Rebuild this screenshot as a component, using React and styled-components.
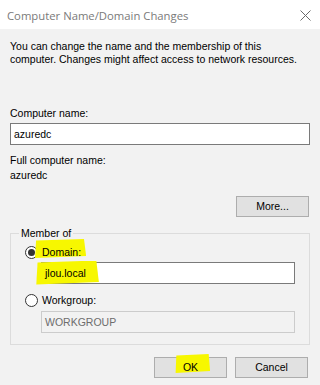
import React from "react";
import styled, { createGlobalStyle } from "styled-components";

const GlobalStyle = createGlobalStyle`
  html, body {
    margin: 0;
    padding: 0;
    background: #f2f2f2;
  }
  * {
    box-sizing: border-box;
  }
`;

export default function App() {
  return (
    <>
      <GlobalStyle />
      <Dialog>
        <TitleBar>
          <Title>Computer Name/Domain Changes</Title>
          <CloseButton aria-label="Close">
            <svg width="11" height="11" viewBox="0 0 11 11">
              <path d="M0.5 0.5 L10.5 10.5 M10.5 0.5 L0.5 10.5" stroke="#6a6a6a" strokeWidth="1" fill="none" />
            </svg>
          </CloseButton>
        </TitleBar>

        <Body>
          <Intro>
            You can change the name and the membership of this
            <br />
            computer. Changes might affect access to network resources.
          </Intro>

          <Label $top={41}>Computer name:</Label>
          <TextBox $gap={3}>azuredc</TextBox>

          <Label $top={9}>Full computer name:</Label>
          <Value>azuredc</Value>

          <RightRow $top={14}>
            <PushButton>More...</PushButton>
          </RightRow>

          <GroupBox>
            <Legend>Member of</Legend>

            <RadioRow>
              <Radio $checked />
              <RadioText>
                <Marker $l={8} $r={5} $t={7} $b={0}>Domain:</Marker>
              </RadioText>
            </RadioRow>
            <Indented>
              <TextBox $gap={3}>
                <Marker $l={10} $r={13} $t={6} $b={5}>jlou.local</Marker>
              </TextBox>
            </Indented>

            <RadioRow $top={10}>
              <Radio />
              <RadioText>Workgroup:</RadioText>
            </RadioRow>
            <Indented>
              <TextBox $gap={4} $disabled>WORKGROUP</TextBox>
            </Indented>
          </GroupBox>

          <ButtonRow>
            <PushButton>
              <Marker $l={8} $r={12} $t={7} $b={0}>OK</Marker>
            </PushButton>
            <PushButton>Cancel</PushButton>
          </ButtonRow>
        </Body>
      </Dialog>
    </>
  );
}

const Dialog = styled.div`
  width: 320px;
  height: 385px;
  display: flex;
  flex-direction: column;
  background: #f2f2f2;
  font-family: "Liberation Sans", Arial, sans-serif;
  font-size: 10.5px;
  color: #000;
  overflow: hidden;
`;

const TitleBar = styled.div`
  height: 29px;
  background: #ffffff;
  display: flex;
  align-items: center;
  justify-content: space-between;
  padding: 1px 9px 0 7px;
`;

const Title = styled.span`
  font-family: "Open Sans", "Noto Sans", sans-serif;
  font-size: 11.3px;
  color: #7a7a7a;
`;

const CloseButton = styled.span`
  display: flex;
  align-items: center;
  padding-top: 1px;
`;

const Body = styled.div`
  display: flex;
  flex-direction: column;
  padding: 0 10px;
`;

const Intro = styled.p`
  margin: 11px 0 0;
  line-height: 13px;
  white-space: nowrap;
`;

const Label = styled.div`
  margin-top: ${({ $top }) => $top}px;
  line-height: 13px;
`;

const Value = styled.div`
  margin-top: 2px;
  line-height: 13px;
`;

const TextBox = styled.div`
  margin-top: ${({ $gap }) => $gap}px;
  height: 22px;
  display: flex;
  align-items: center;
  padding-left: 3px;
  line-height: 13px;
  border: 1px solid ${({ $disabled }) => ($disabled ? "#cccccc" : "#7a7a7a")};
  background: ${({ $disabled }) => ($disabled ? "#f2f2f2" : "#ffffff")};
  color: ${({ $disabled }) => ($disabled ? "#6d6d6d" : "#000")};
`;

const RightRow = styled.div`
  margin-top: ${({ $top }) => $top}px;
  display: flex;
  justify-content: flex-end;
  padding-right: 1px;
`;

const PushButton = styled.button`
  width: 73px;
  height: 21px;
  padding: 0;
  border: 1px solid #adadad;
  background: #e1e1e1;
  font-family: inherit;
  font-size: 10.5px;
  color: #000;
  line-height: 13px;
`;

const GroupBox = styled.fieldset`
  margin: 10px 0 0;
  padding: 6px 14px 11px 14px;
  border: 1px solid #dcdcdc;
  min-width: 0;
`;

const Legend = styled.legend`
  margin-left: -6px;
  padding: 0 2px;
  line-height: 13px;
`;

const RadioRow = styled.div`
  margin-top: ${({ $top = 0 }) => $top}px;
  display: flex;
  align-items: center;
  gap: 4px;
  height: 13px;
`;

const Radio = styled.span`
  width: 13px;
  height: 13px;
  border-radius: 50%;
  border: 1px solid #333333;
  background: #ffffff;
  display: flex;
  align-items: center;
  justify-content: center;

  &::after {
    content: "";
    width: 7px;
    height: 7px;
    border-radius: 50%;
    background: #333333;
    display: ${({ $checked }) => ($checked ? "block" : "none")};
  }
`;

const RadioText = styled.span`
  line-height: 13px;
`;

const Indented = styled.div`
  padding-left: 16px;
`;

const Marker = styled.span`
  position: relative;
  isolation: isolate;

  &::before {
    content: "";
    position: absolute;
    z-index: -1;
    left: -${({ $l }) => $l}px;
    right: -${({ $r }) => $r}px;
    top: -${({ $t }) => $t}px;
    bottom: -${({ $b }) => $b}px;
    background: #f7f700;
    clip-path: polygon(4% 8%, 96% 0%, 100% 90%, 2% 100%);
  }
`;

const ButtonRow = styled.div`
  margin-top: 12px;
  display: flex;
  justify-content: flex-end;
  gap: 8px;
  padding-right: 2px;
`;
